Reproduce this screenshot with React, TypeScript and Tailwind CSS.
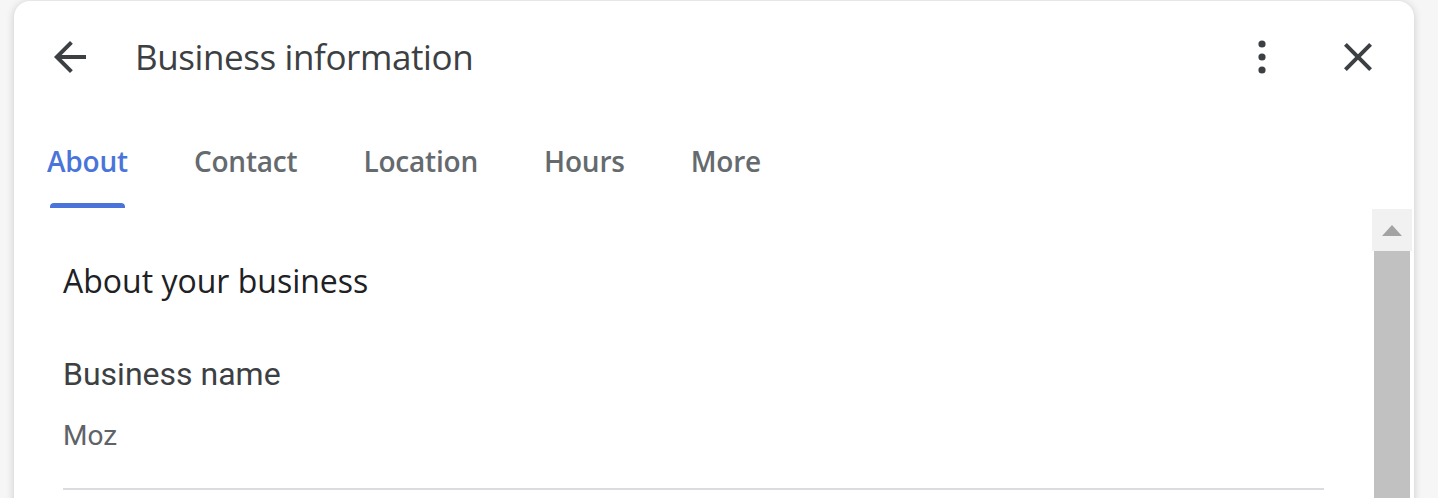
import React from "react";

const tabs = ["About", "Contact", "Location", "Hours", "More"];

export default function App() {
  return (
    <div className="w-[1438px] h-[498px] overflow-hidden bg-[#f6f6f6] pl-[14px] pr-[24px] pt-[1px]">
      <div className="relative h-[520px] bg-white rounded-[16px] shadow-[0_1px_8px_rgba(0,0,0,0.18)] flex flex-col">
        {/* Header */}
        <div className="h-[112px] flex items-center shrink-0">
          <div className="w-[48px] h-[48px] ml-[32px] flex items-center justify-center">
            <svg width="48" height="48" viewBox="0 0 24 24" fill="#3c4043">
              <path d="M20 11H7.83l5.59-5.59L12 4l-8 8 8 8 1.41-1.41L7.83 13H20v-2z" />
            </svg>
          </div>
          <div className="ml-[41px] text-[35px] text-[#3c4043] font-['Open_Sans',sans-serif] tracking-[-0.4px]">
            Business information
          </div>
          <div className="flex-1" />
          <div className="w-[48px] h-[48px] flex items-center justify-center">
            <svg width="48" height="48" viewBox="0 0 24 24" fill="#3c4043">
              <circle cx="12" cy="5.5" r="1.8" />
              <circle cx="12" cy="12" r="1.8" />
              <circle cx="12" cy="18.5" r="1.8" />
            </svg>
          </div>
          <div className="w-[48px] h-[48px] ml-[48px] mr-[32px] flex items-center justify-center">
            <svg width="48" height="48" viewBox="0 0 24 24" fill="#3c4043">
              <path d="M19 6.41L17.59 5 12 10.59 6.41 5 5 6.41 10.59 12 5 17.59 6.41 19 12 13.41 17.59 19 19 17.59 13.41 12z" />
            </svg>
          </div>
        </div>
        {/* Tabs */}
        <div className="h-[96px] flex pl-[33px] gap-[66px] shrink-0">
          {tabs.map((t, i) => (
            <div key={t} className="relative h-full flex items-center">
              <span
                className={
                  "text-[28px] font-semibold font-['Open_Sans',sans-serif] tracking-[-0.2px] " +
                  (i === 0 ? "text-[#4a74d9]" : "text-[#656a6e]")
                }
              >
                {t}
              </span>
              {i === 0 && (
                <div className="absolute left-[3px] right-[3px] bottom-[1px] h-[5px] rounded-t-[4px] bg-[#4a74d9]" />
              )}
            </div>
          ))}
        </div>
        {/* Content */}
        <div className="flex flex-1">
          <div className="flex-1 pl-[49px] pr-[48px] pt-[52px]">
            <div className="text-[32px] leading-[40px] font-medium text-[#202124] font-['Open_Sans',sans-serif]">
              About your business
            </div>
            <div className="mt-[53px] text-[32px] leading-[40px] text-[#3c4043] font-['Roboto',sans-serif]">
              Business name
            </div>
            <div className="mt-[24px] text-[28px] leading-[36px] text-[#5f6368] font-['Roboto',sans-serif]">
              Moz
            </div>
            <div className="mt-[34px] h-[2px] bg-[#dadce0]" />
          </div>
          <div className="w-[40px] mr-[2px] flex flex-col">
            <div className="h-[42px] bg-[#f1f1f1] flex items-center justify-center">
              <svg width="20" height="11" viewBox="0 0 20 11">
                <path d="M0 11 L10 0 L20 11 Z" fill="#a3a3a3" />
              </svg>
            </div>
            <div className="flex-1 bg-[#c1c1c1] mx-[2px]" />
          </div>
        </div>
      </div>
    </div>
  );
}
